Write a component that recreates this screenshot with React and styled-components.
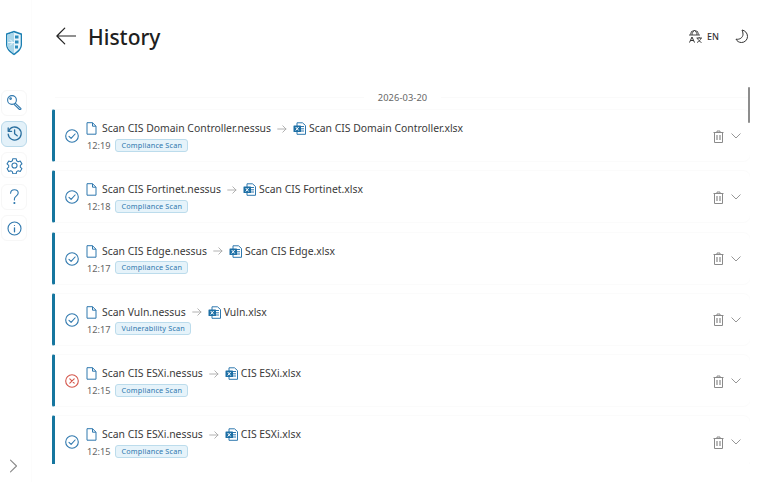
import React from 'react';
import styled, { createGlobalStyle } from 'styled-components';

const Global = createGlobalStyle`
  html, body { margin: 0; padding: 0; background: #fff; overflow: hidden; }
  body { font-family: "Noto Sans", "Open Sans", sans-serif; }
`;
const Page = styled.div`
  width: 768px; height: 482px; display: flex; overflow: hidden; background: #fff;
`;
const Side = styled.aside`
  width: 32px; flex: none; display: flex; flex-direction: column; align-items: center;
  border-right: 1px solid #fcfcfc; height: 482px; box-sizing: border-box;
`;
const Logo = styled.div`
  height: 28px; margin: 30px 0 31.500px -3px; display: flex;
`;
const NavList = styled.nav`
  display: flex; flex-direction: column; gap: 5.400px; margin-left: -3px;
`;
const NavBtn = styled.button`
  width: 26px; height: 26px; padding: 0; display: flex; align-items: center; justify-content: center;
  border-radius: 6px; border: 1px solid ${p => (p.$active ? '#b9d9ea' : '#f7f7f7')};
  background: ${p => (p.$active ? '#e3f1f9' : '#fff')};
  color: #2f78ae;
`;
const Expand = styled.div`
  margin-top: auto; margin-bottom: 9px; margin-left: -4px; color: #8a8a8a; display: flex;
`;
const Main = styled.main`
  flex: 1; min-width: 0; display: flex; flex-direction: column; padding-left: 20px;
`;
const Header = styled.header`
  height: 87px; flex: none; display: flex; align-items: flex-start; padding-top: 21px; box-sizing: border-box;
`;
const Back = styled.div`
  width: 22px; height: 30px; margin: 0 10px 0 4px; display: flex; align-items: center; color: #222;
`;
const Title = styled.h1`
  margin: 1px 0 0; font-size: 21px; font-weight: 500; line-height: 30px; color: #202020;
`;
const Tools = styled.div`
  margin-left: auto; margin-right: 19px; display: flex; align-items: center; height: 30px; color: #333;
`;
const Lang = styled.span`
  font-size: 9px; font-weight: 500; margin: 0 15px 0 4px; color: #333;
`;
const Scroll = styled.div`
  position: relative; flex: none; height: 377px; overflow: hidden; margin-right: 18px;
`;
const ScrollThumb = styled.div`
  position: absolute; right: 0; top: 0; width: 2px; height: 36px; background: #8d8d8d; border-radius: 1px;
`;
const DateRow = styled.div`
  height: 22px; padding-bottom: 2px; box-sizing: border-box; display: flex; align-items: center; gap: 14px;
  font-size: 9.300px; color: #666; letter-spacing: .1px; padding-left: 3px;
  &::before, &::after { content: ''; flex: 1; height: 1px; background: #fafafa; }
`;
const List = styled.div`
  display: flex; flex-direction: column; gap: 8.250px;
`;
const Card = styled.article`
  height: 53px; flex: none; display: flex; align-items: center; box-sizing: border-box;
  border-left: 3px solid #16769f; border-radius: 2px 8px 8px 2px;
  border-top: 1px solid #fbfbfb; border-bottom: 1px solid #fbfbfb; border-right: 1px solid #fcfcfc;
  margin-right: -1px;
  padding: 0 9px 0 10px;
`;
const Status = styled.div`
  width: 14px; height: 14px; color: ${p => (p.$error ? '#d4574c' : '#2f78ae')}; display: flex; margin-top: 1px;
`;
const Body = styled.div`
  margin-left: 8px; flex: 1; min-width: 0; display: flex; flex-direction: column; gap: 3px; margin-top: 3px;
`;
const Files = styled.div`
  display: flex; align-items: center; font-size: 10.400px; line-height: 15px; color: #3a3a3a;
`;
const FileIcon = styled.span`
  width: 11px; height: 13px; display: flex; margin: 0 5px 0 -1px; color: #2f78ae;
`;
const Arrow = styled.span`
  width: 10px; display: flex; margin: 0 6px 0 6px; color: #a9a9a9;
`;
const XlsIcon = styled.span`
  width: 13px; height: 13px; display: flex; margin-right: 3px;
`;
const Meta = styled.div`
  display: flex; align-items: center; gap: 5px; font-size: 9.200px; color: #666; line-height: 14px;
`;
const Tag = styled.span`
  height: 13px; line-height: 11px; padding: 0 5px; margin-top: -2px; box-sizing: border-box;
  font-size: 7.300px; font-weight: 400; color: #2f78ae; background: #e6f3fa;
  border: 1px solid #bcdcec; border-radius: 3px; letter-spacing: .15px;
`;
const Actions = styled.div`
  display: flex; align-items: center; gap: 7px; color: #8a8a8a; margin-top: 1px;
`;

const KeyI = () => (
  <svg width="17" height="17" viewBox="0 0 17 17" fill="none" stroke="currentColor" strokeWidth="1.100" strokeLinejoin="round" strokeLinecap="round">
    <circle cx="6" cy="6" r="4.400" />
    <circle cx="4.600" cy="4.600" r=".8" />
    <path d="M9.200 9.200l5.600 5.100c.4.4.2 1.200-.5 1.200h-.8l-5.400-5.200" />
  </svg>
);
const HistI = () => (
  <svg width="17" height="17" viewBox="0 0 17 17" fill="none" stroke="#2a6f9f" strokeWidth="1.300" strokeLinecap="round" strokeLinejoin="round">
    <path d="M2.600 6.200a6.500 6.500 0 1 1-.4 3" />
    <path d="M2.200 2.900v3.400h3.400" />
    <path d="M8.600 4.800v4l2.600 2" />
  </svg>
);
const GearI = () => (
  <svg width="17" height="17" viewBox="0 0 24 24" fill="none" stroke="currentColor" strokeWidth="1.500" strokeLinejoin="round">
    <path d="M9.600 2.400h4.800l.6 3 2.200 1.200 2.900-1 2.400 4.100-2.300 2v2.600l2.300 2-2.400 4.100-2.900-1-2.200 1.200-.6 3H9.600l-.6-3-2.200-1.200-2.900 1-2.400-4.100 2.300-2v-2.600l-2.300-2 2.400-4.100 2.900 1L9 5.400z" />
    <circle cx="12" cy="12" r="3.600" />
  </svg>
);
const HelpI = () => (
  <svg width="17" height="17" viewBox="0 0 17 17" fill="none" stroke="currentColor" strokeWidth="1.100" strokeLinecap="round">
    <path d="M4.600 5.200C4.700 3 6.400 1.700 8.400 1.700c2.200 0 3.800 1.400 3.800 3.300 0 1.500-.9 2.300-2 3.100-1.100.8-1.800 1.500-1.800 3v.8" />
    <circle cx="8.400" cy="15" r=".5" fill="currentColor" />
  </svg>
);
const InfoI = () => (
  <svg width="15" height="15" viewBox="0 0 15 15" fill="none" stroke="currentColor" strokeWidth="1.100" strokeLinecap="round">
    <circle cx="7.500" cy="7.500" r="6.500" />
    <path d="M7.500 6.800v4" strokeWidth="1.300" />
    <circle cx="7.500" cy="4.500" r=".6" fill="currentColor" stroke="none" />
  </svg>
);
const Shield = () => (
  <svg width="18" height="26" viewBox="0 0 18 26">
    <path d="M9 .8l8 2.700v11c0 4.800-3.800 8-8 10.700-4.200-2.700-8-5.900-8-10.700v-11z" fill="#1b7fb2" />
    <path d="M9 2.500l6.700 2.200v9.800c0 3.800-3.200 6.600-6.700 8.900-3.500-2.300-6.700-5.100-6.700-8.900V4.700z" fill="#e9f5fb" />
    <path d="M9 2.500v20.900c-3.500-2.300-6.700-5.100-6.700-8.900V4.700z" fill="#a9d6ea" />
    <path d="M3 12.500h6M5 9.500l3 3-3 3" stroke="#fff" strokeWidth=".8" fill="none" />
    <rect x="10" y="5.500" width="3.500" height="3" fill="#2b8bbb" />
    <rect x="10" y="10.500" width="3.500" height="3" fill="#2b8bbb" />
    <rect x="10" y="15.500" width="3" height="3" fill="#2b8bbb" />
  </svg>
);
const BackI = () => (
  <svg width="20" height="18" viewBox="0 0 20 18" fill="none" stroke="currentColor" strokeWidth="1.200" strokeLinecap="round" strokeLinejoin="round">
    <path d="M19.500 9H1M8.700 1.200L.9 9l7.800 7.800" />
  </svg>
);
const LangI = () => (
  <svg width="15" height="15" viewBox="0 0 15 15" fill="none" stroke="currentColor" strokeWidth=".9">
    <path d="M2.500 5.500a4 4 0 0 1 8 0" />
    <path d="M1 6h11M4 6c0-2 1-3.500 2.500-4.500M9 6c0-2-1-3.500-2.500-4.500" />
    <path d="M1.500 13.500L4 8l2.500 5.500M2.500 11.500h3" strokeWidth="1" />
    <path d="M8.500 9h5.500M11.200 8v1M9.500 9c.5 2 2 3.500 4 4.500M13 9c-.5 2-2 3.500-4 4.500" />
  </svg>
);
const Moon = () => (
  <svg width="15" height="15" viewBox="0 0 15 15" fill="none" stroke="currentColor" strokeWidth="1" strokeLinejoin="round">
    <path d="M8 1c3 .5 5.500 3 5.500 6.500a6 6 0 0 1-6 6c-2.500 0-4.500-1.300-5.500-3.300 3.500.6 7-1.500 7-5 0-1.700-.4-3-1-4.200z" />
  </svg>
);
const Check = () => (
  <svg width="14" height="14" viewBox="0 0 14 14" fill="none" stroke="currentColor" strokeWidth="1.100" strokeLinecap="round" strokeLinejoin="round">
    <circle cx="7" cy="7" r="6.300" />
    <path d="M4 7.300l2.100 2 4-4.300" />
  </svg>
);
const Cross = () => (
  <svg width="14" height="14" viewBox="0 0 14 14" fill="none" stroke="currentColor" strokeWidth="1.100" strokeLinecap="round">
    <circle cx="7" cy="7" r="6.300" />
    <path d="M4.800 4.800l4.400 4.400M9.200 4.800l-4.400 4.400" />
  </svg>
);
const Doc = () => (
  <svg width="11" height="13" viewBox="0 0 11 13" fill="none" stroke="currentColor" strokeWidth="1" strokeLinejoin="round">
    <path d="M1 .7h5.500L10 4.200v8H1zM6.500.7v3.500H10" />
  </svg>
);
const ArrowI = () => (
  <svg width="10" height="8" viewBox="0 0 10 8" fill="none" stroke="currentColor" strokeWidth=".9" strokeLinecap="round" strokeLinejoin="round">
    <path d="M.7 4h8.300M5.800 .8L9 4 5.800 7.200" />
  </svg>
);
const Xls = () => (
  <svg width="13" height="13" viewBox="0 0 13 13">
    <path d="M4 .8h5.500L12.500 3.500v8.800H4z" fill="#fff" stroke="#2f78ae" strokeWidth="1" />
    <path d="M7.500 4.500h3.500M7.500 6.800h3.500M7.500 9h3.500" stroke="#2f78ae" strokeWidth="1" />
    <rect x=".5" y="3.500" width="7.500" height="6.500" rx=".6" fill="#1d6fa5" />
    <path d="M2.700 5l3 3.500M5.700 5l-3 3.500" stroke="#fff" strokeWidth="1" />
  </svg>
);
const Trash = () => (
  <svg width="11" height="13" viewBox="0 0 11 13" fill="none" stroke="currentColor" strokeWidth="1">
    <path d="M.5 2.500h10M4 2.500V1h3v1.500M1.500 2.500v10h8v-10" />
    <path d="M4 5v5M7 5v5" strokeWidth="1.200" />
  </svg>
);
const Down = () => (
  <svg width="10" height="6" viewBox="0 0 10 6" fill="none" stroke="currentColor" strokeWidth=".9" strokeLinecap="round" strokeLinejoin="round">
    <path d="M.8 .8L5 5l4.200-4.200" />
  </svg>
);
const RightI = () => (
  <svg width="9" height="14" viewBox="0 0 9 14" fill="none" stroke="currentColor" strokeWidth="1.100" strokeLinecap="round" strokeLinejoin="round">
    <path d="M1.500 1.200L7.500 7l-6 5.800" />
  </svg>
);

const items = [
  ['Scan CIS Domain Controller.nessus', 'Scan CIS Domain Controller.xlsx', '12:19', 'Compliance Scan'],
  ['Scan CIS Fortinet.nessus', 'Scan CIS Fortinet.xlsx', '12:18', 'Compliance Scan'],
  ['Scan CIS Edge.nessus', 'Scan CIS Edge.xlsx', '12:17', 'Compliance Scan'],
  ['Scan Vuln.nessus', 'Vuln.xlsx', '12:17', 'Vulnerability Scan'],
  ['Scan CIS ESXi.nessus', 'CIS ESXi.xlsx', '12:15', 'Compliance Scan', true],
  ['Scan CIS ESXi.nessus', 'CIS ESXi.xlsx', '12:15', 'Compliance Scan'],
];

export default function App() {
  return (
    <Page>
      <Global />
      <Side>
        <Logo><Shield /></Logo>
        <NavList>
          <NavBtn><KeyI /></NavBtn>
          <NavBtn $active><HistI /></NavBtn>
          <NavBtn><GearI /></NavBtn>
          <NavBtn><HelpI /></NavBtn>
          <NavBtn><InfoI /></NavBtn>
        </NavList>
        <Expand><RightI /></Expand>
      </Side>
      <Main>
        <Header>
          <Back><BackI /></Back>
          <Title>History</Title>
          <Tools>
            <LangI />
            <Lang>EN</Lang>
            <Moon />
          </Tools>
        </Header>
        <Scroll>
          <ScrollThumb />
          <DateRow>2026-03-20</DateRow>
          <List>
            {items.map(([a, b, t, tag, err], i) => (
              <Card key={i}>
                <Status $error={err}>{err ? <Cross /> : <Check />}</Status>
                <Body>
                  <Files>
                    <FileIcon><Doc /></FileIcon>
                    {a}
                    <Arrow><ArrowI /></Arrow>
                    <XlsIcon><Xls /></XlsIcon>
                    {b}
                  </Files>
                  <Meta>{t}<Tag>{tag}</Tag></Meta>
                </Body>
                <Actions><Trash /><Down /></Actions>
              </Card>
            ))}
          </List>
        </Scroll>
      </Main>
    </Page>
  );
}
